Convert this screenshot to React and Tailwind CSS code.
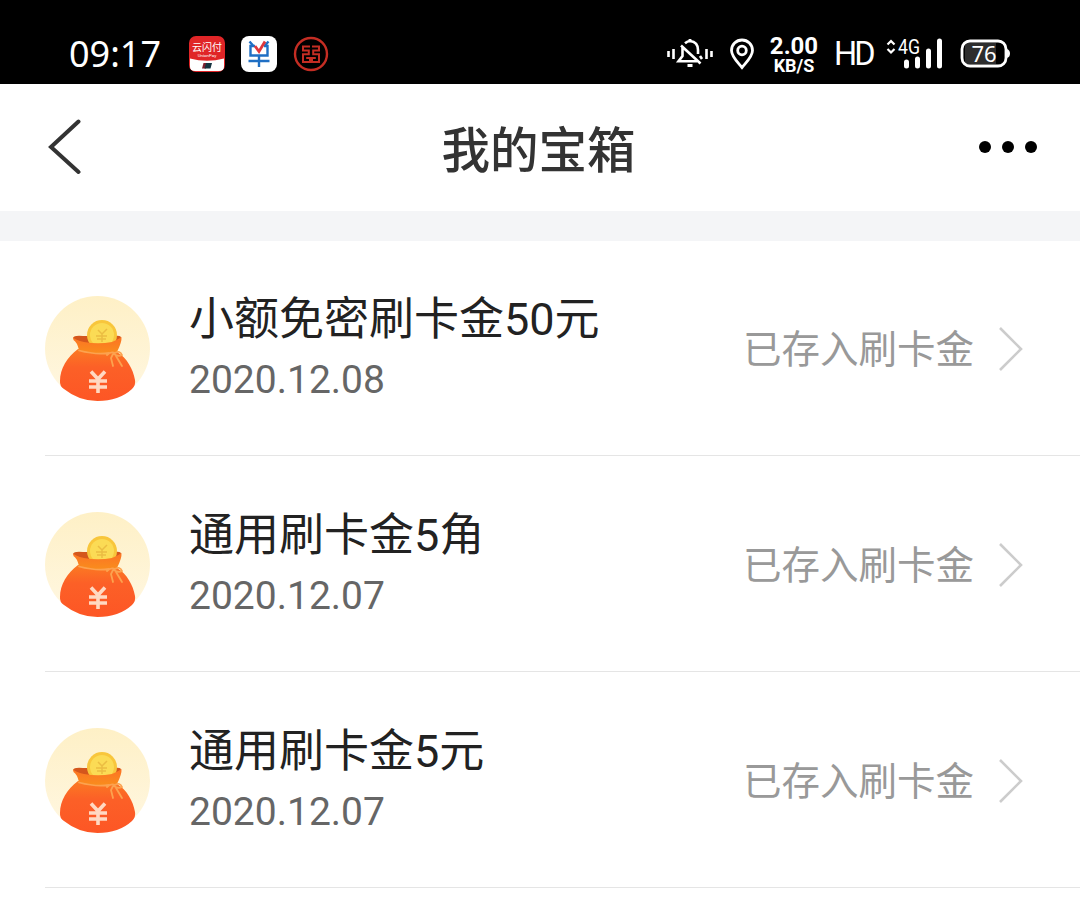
const items = [
  { title: "小额免密刷卡金50元", date: "2020.12.08", status: "已存入刷卡金" },
  { title: "通用刷卡金5角", date: "2020.12.07", status: "已存入刷卡金" },
  { title: "通用刷卡金5元", date: "2020.12.07", status: "已存入刷卡金" },
];

function UnionPayIcon() {
  return (
    <svg width="36" height="36" viewBox="0 0 36 36">
      <defs>
        <clipPath id="pay-clip">
          <rect width="36" height="36" rx="7" />
        </clipPath>
      </defs>
      <g clipPath="url(#pay-clip)">
        <rect width="36" height="36" fill="#e02527" />
        <path d="M1 22.500Q18 27 35 22.500V31Q35 35 30 35H6Q1 35 1 31Z" fill="#fff" />
        <path d="M14.500 27h4l-1.500 5.500h-4z" fill="#7d2030" />
        <path d="M17 27h6l-1.500 5.500h-6z" fill="#163440" />
      </g>
      <text
        x="18"
        y="15"
        textAnchor="middle"
        fontSize="10"
        fill="#fff"
        fontFamily="'Noto Sans CJK SC', sans-serif"
      >
        云闪付
      </text>
      <text
        x="18"
        y="20.500"
        textAnchor="middle"
        fontSize="4.400"
        fill="#fff"
        fontFamily="Roboto, sans-serif"
      >
        UnionPay
      </text>
    </svg>
  );
}

function OrderIcon() {
  return (
    <svg width="36" height="36" viewBox="0 0 36 36" fill="none">
      <rect width="36" height="36" rx="8" fill="#fff" />
      <g stroke="#1f6fc4" strokeWidth="2.400">
        <path d="M8.500 5.500L12.500 10M14 10H9.500V19.500H26.500V10H23M27.500 5.500L23.500 10" />
        <path d="M7.500 25H28.500M18 19.500V31" />
      </g>
      <path d="M14 10l4 5.500 6-10" stroke="#e0383c" strokeWidth="2.800" />
    </svg>
  );
}

function BankIcon() {
  return (
    <svg width="36" height="36" viewBox="0 0 36 36" fill="none" stroke="#c42d23">
      <circle cx="18" cy="18" r="16" strokeWidth="2.400" />
      <path
        d="M17 10.500H10V14.500H15.800V18.200H10V26H17V22H13.200M19 10.500H26V14.500H20.200V18.200H26V26H19V22H22.800"
        strokeWidth="2"
      />
    </svg>
  );
}

function MutedBell() {
  return (
    <svg width="46" height="32" viewBox="0 0 46 32" fill="none" stroke="#fff">
      <path d="M1.500 13v6M6.500 11v10M39.500 11v10M44.500 13v6" strokeWidth="2.600" />
      <path
        d="M18 5.200Q20.500 3 23 3Q31 4 31 12V16M15.500 9.500V18L11.500 23.300H30M14 7.500L33.500 25.500M35 21l-2-3"
        strokeWidth="2.600"
      />
      <path d="M23 1v3M20.500 27.500h5" strokeWidth="2.800" />
    </svg>
  );
}

function LocationPin() {
  return (
    <svg width="26" height="32" viewBox="0 0 26 32" fill="none" stroke="#fff">
      <path
        d="M13 29.500C8 23.500 2.500 18.500 2.500 12.500a10.500 10.500 0 0 1 21 0C23.500 18.500 18 23.500 13 29.500Z"
        strokeWidth="2.800"
      />
      <circle cx="13" cy="12.500" r="4.300" strokeWidth="2.800" />
    </svg>
  );
}

function Signal() {
  return (
    <svg width="58" height="34" viewBox="0 0 58 34" fill="none" stroke="#fff">
      <path d="M2.500 7.500l3.500-3.500 3.500 3.500M2.500 12l3.500 3.500 3.500-3.500" strokeWidth="2.200" />
      <path
        d="M21.500 25v4M32.500 22v7M43.500 14v15M54.500 4v25"
        strokeWidth="5"
        strokeLinecap="round"
      />
      <text
        x="13"
        y="16.500"
        fontSize="19.500"
        textLength="22"
        lengthAdjust="spacingAndGlyphs"
        fill="#fff"
        stroke="none"
        fontFamily="Roboto, sans-serif"
      >
        4G
      </text>
    </svg>
  );
}

function Battery() {
  return (
    <svg width="52" height="30" viewBox="0 0 52 30">
      <rect x="5" y="4" width="31" height="21" fill="#2d2d2d" />
      <rect
        x="2"
        y="2"
        width="44"
        height="25"
        rx="8"
        fill="none"
        stroke="#fff"
        strokeWidth="2.800"
      />
      <path d="M47 10q3 1 3 4.500t-3 4.500z" fill="#fff" />
      <text
        x="24"
        y="22.500"
        textAnchor="middle"
        fontSize="22"
        fill="#fff"
        fontFamily="'Noto Sans', sans-serif"
      >
        76
      </text>
    </svg>
  );
}

function StatusBar() {
  return (
    <div className="flex h-[84px] items-center justify-between bg-black pt-[24px] pr-[68px] pl-[69px] text-white">
      <div className="flex items-center">
        <span className="w-[120px] font-['Noto_Sans',sans-serif] text-[36px] leading-none">
          09:17
        </span>
        <div className="flex gap-4">
          <UnionPayIcon />
          <OrderIcon />
          <BankIcon />
        </div>
      </div>
      <div className="flex items-center">
        <MutedBell />
        <div className="ml-4">
          <LocationPin />
        </div>
        <div className="ml-[13px] flex w-[52px] flex-col items-center pt-[2px] font-[Roboto,sans-serif] font-bold">
          <span className="text-[24px] leading-[20px]">2.00</span>
          <span className="text-[18px] leading-[19px]">KB/S</span>
        </div>
        <span className="ml-[14px] w-[39px] font-[Roboto,sans-serif] text-[32.500px] leading-none tracking-[-3px]">
          HD
        </span>
        <div className="ml-[12px]">
          <Signal />
        </div>
        <div className="ml-[17px]">
          <Battery />
        </div>
      </div>
    </div>
  );
}

function NavBar() {
  return (
    <header className="flex h-[127px] items-center justify-between bg-white pr-[43px] pb-[2px] pl-[48px]">
      <svg width="50" height="56" viewBox="0 0 50 56" fill="none">
        <path
          d="M30.500 2.500L3 28L30.500 53"
          stroke="#333"
          strokeWidth="4"
          strokeLinecap="round"
        />
      </svg>
      <h1 className="pt-[2px] font-['Noto_Sans_CJK_SC',sans-serif] text-[48.500px] leading-none font-medium text-[#333]">
        我的宝箱
      </h1>
      <div className="flex gap-[11px]">
        <span className="size-3 rounded-full bg-black" />
        <span className="size-3 rounded-full bg-black" />
        <span className="size-3 rounded-full bg-black" />
      </div>
    </header>
  );
}

function MoneyBag() {
  return (
    <svg width="105" height="106" viewBox="0 0 105 106" className="shrink-0">
      <defs>
        <linearGradient id="disc" x1="0" y1="0" x2="0" y2="1">
          <stop offset="0%" stopColor="#fef0c6" />
          <stop offset="100%" stopColor="#fff7e2" />
        </linearGradient>
        <linearGradient id="bag" x1="0" y1="0" x2="0" y2="1">
          <stop offset="0%" stopColor="#fb7a22" />
          <stop offset="35%" stopColor="#fc6027" />
          <stop offset="100%" stopColor="#fd5625" />
        </linearGradient>
        <linearGradient id="neck" x1="0" y1="0" x2="0" y2="1">
          <stop offset="0%" stopColor="#fc7325" />
          <stop offset="100%" stopColor="#f98e1c" />
        </linearGradient>
      </defs>
      <circle cx="52.500" cy="52.500" r="52.500" fill="url(#disc)" />
      {/* bag body */}
      <path
        d="M33 53C22 61 15 73 15 85Q14.500 90 19 93Q34 105 52.500 105Q74 105 87 93Q91 89 90 84C88 73 82 62 72 56Z"
        fill="url(#bag)"
      />
      <path d="M28 42Q29 39 38 40H70Q76 39 76 42Q73 48 53 49Q34 49 28 42Z" fill="#d4561c" />
      {/* coin */}
      <circle cx="57" cy="39" r="15" fill="#f8c63c" />
      <circle cx="57" cy="39" r="12" fill="#fbdb55" />
      <path
        d="M53 34l4 4 5-5M51 40h11M52 43h9M57 38v8"
        fill="none"
        stroke="#ebbd42"
        strokeWidth="1.500"
      />
      <path
        d="M28 41Q30 44 39 46Q53 48.500 67 46Q74 43 76.500 41Q77 46 72 56Q53 61 34 54Q32 46 28.500 44Z"
        fill="url(#neck)"
      />
      <path
        d="M34 54.500Q51 59 64 57M62 59Q66 55 70 57Q75 54 77 59Q73 61 69 58M68 58L66 62L68 70M71 60L77 70"
        fill="none"
        stroke="#fca24f"
        strokeWidth="1.800"
        strokeLinecap="round"
      />
      <path
        d="M46 75.500L53 83L60 75.500M53 83V97M44 85H62M44 91H62"
        fill="none"
        stroke="#ffd9c2"
        strokeWidth="3.600"
      />
    </svg>
  );
}

function RewardRow({ title, date, status }) {
  return (
    <li className="flex h-[216px] items-center border-b border-[#e5e5e5] pt-[2px] pr-[56px] first:h-[215px] first:pt-px">
      <MoneyBag />
      <div className="ml-[39px] flex-1 pb-px">
        <div className="pt-px font-[Roboto,'Noto_Sans_CJK_SC',sans-serif] text-[45px] leading-[64px] text-[#222]">
          {title}
        </div>
        <div className="font-[Roboto,sans-serif] text-[39px] leading-[57px] text-[#666]">
          {date}
        </div>
      </div>
      <span className="pb-[6px] font-['Noto_Sans_CJK_SC',sans-serif] text-[38.500px] leading-[56px] text-[#999]">
        {status}
      </span>
      <svg width="26" height="46" viewBox="0 0 26 46" fill="none" className="ml-[24px]">
        <path d="M2 2L23 23L2 44" stroke="#ccc" strokeWidth="2.600" />
      </svg>
    </li>
  );
}

export default function App() {
  return (
    <div className="flex h-[918px] w-[1080px] flex-col overflow-hidden bg-white">
      <StatusBar />
      <NavBar />
      <div className="h-[30px] bg-[#f4f5f7]" />
      <ul className="flex-1 bg-white pl-[45px]">
        {items.map((item) => (
          <RewardRow key={item.title} {...item} />
        ))}
      </ul>
    </div>
  );
}
